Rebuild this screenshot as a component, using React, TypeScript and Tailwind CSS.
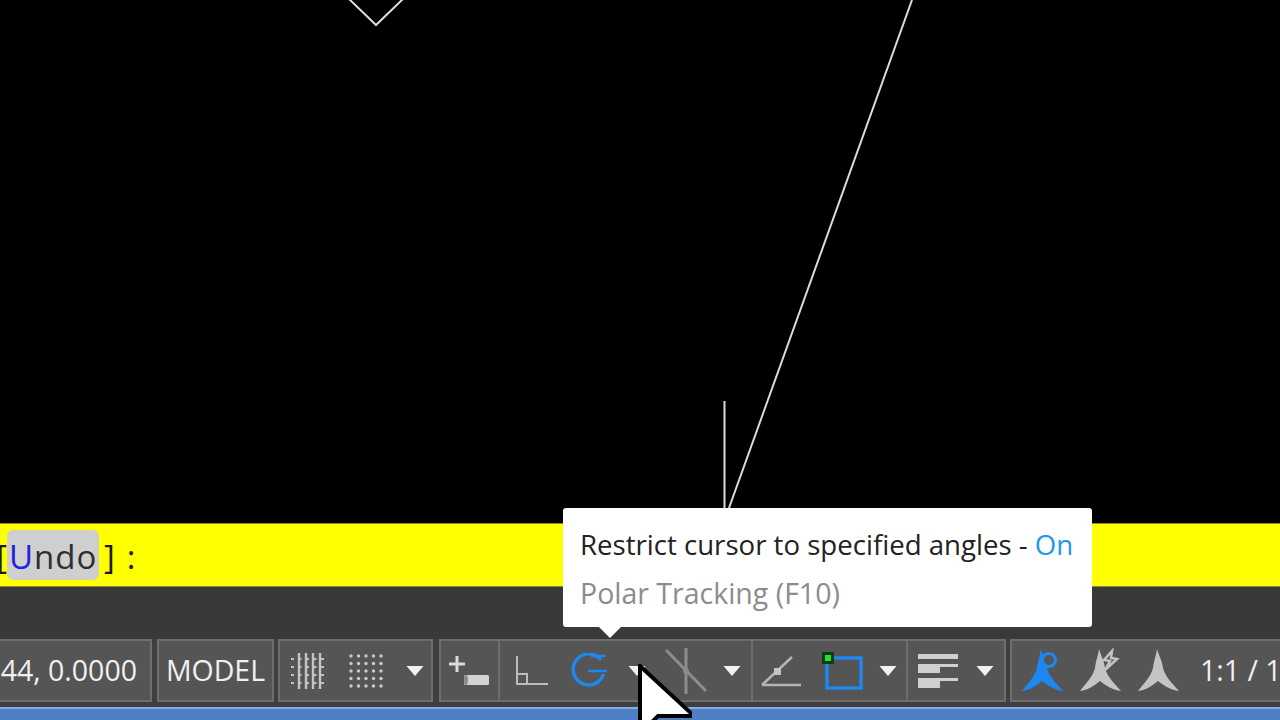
import React from 'react'

const Caret = () => (
  <svg width="18" height="12" viewBox="0 0 18 12" className="shrink-0">
    <path d="M0.5 1 H17.5 L9 11 Z" fill="#f2f2f2" />
  </svg>
)

const GridIcon = () => (
  <svg width="38" height="38" viewBox="0 0 38 38" fill="none" className="shrink-0">
    <path d="M9 1V37M16 1V37M23 1V37M30 1V37" stroke="#c4c4c4" strokeWidth="2.4" />
    <path d="M1 7H37M1 15H37M1 23H37M1 31H37" stroke="#c4c4c4" strokeWidth="2" strokeDasharray="3 4.5" />
  </svg>
)

const SnapIcon = () => (
  <svg width="36" height="36" viewBox="0 0 36 36" fill="#c9c9c9" className="shrink-0">
    {[3, 10.5, 18, 25.5, 33].flatMap((y) =>
      [3, 10.5, 18, 25.5, 33].map((x) => <circle key={`${x}-${y}`} cx={x} cy={y} r="1.7" />)
    )}
  </svg>
)

const InferIcon = () => (
  <svg width="42" height="34" viewBox="0 0 42 34" fill="none" className="shrink-0">
    <path d="M1 10H17M9 2V18" stroke="#dcdcdc" strokeWidth="3" />
    <rect x="16" y="21" width="25" height="10" rx="1.5" fill="#d4d4d4" />
    <ellipse cx="18" cy="26" rx="2" ry="5" fill="#8a8a8a" />
  </svg>
)

const OrthoIcon = () => (
  <svg width="34" height="32" viewBox="0 0 34 32" fill="none" stroke="#bdbdbd" strokeWidth="2" className="shrink-0">
    <path d="M2 1V29H33" />
    <path d="M2 19H12V29" />
  </svg>
)

const PolarIcon = () => (
  <svg width="38" height="36" viewBox="0 0 38 36" fill="none" stroke="#1e88f0" strokeWidth="3.4" className="shrink-0">
    <path d="M31 7A15.5 15.5 0 1 0 33.5 21" />
    <path d="M18 18H37M21 3H35" strokeWidth="2.6" />
  </svg>
)

const IsoIcon = () => (
  <svg width="44" height="48" viewBox="0 0 44 48" fill="none" stroke="#8d8d8d" strokeWidth="3" className="shrink-0">
    <path d="M2 3L42 44" />
    <path d="M22 1V47" />
    <circle cx="22" cy="24" r="3" fill="#8d8d8d" stroke="none" />
  </svg>
)

const ObjectTrackIcon = () => (
  <svg width="40" height="32" viewBox="0 0 40 32" fill="none" stroke="#b5b5b5" strokeWidth="2.5" className="shrink-0">
    <path d="M1 30H40M1 30L31 2" />
    <rect x="13" y="13" width="7" height="7" fill="#c4c4c4" stroke="none" />
  </svg>
)

const OsnapIcon = () => (
  <svg width="42" height="38" viewBox="0 0 42 38" fill="none" className="shrink-0">
    <rect x="5" y="6" width="34" height="30" stroke="#1e88f0" strokeWidth="3.4" />
    <rect x="0" y="0" width="12" height="12" fill="#0d3d14" />
    <rect x="3" y="3" width="6" height="6" fill="#25e02c" />
  </svg>
)

const LinesIcon = () => (
  <svg width="42" height="36" viewBox="0 0 42 36" fill="#cfcfcf" className="shrink-0">
    <rect x="1" y="1" width="40" height="5" />
    <rect x="1" y="11" width="40" height="3" />
    <rect x="1" y="14" width="22" height="6" />
    <rect x="1" y="25" width="40" height="3" />
    <rect x="1" y="27" width="22" height="8" />
  </svg>
)

const Annotation = ({ color, kind }: { color: string; kind: 'ring' | 'bolt' | 'plain' }) => (
  <svg width="42" height="46" viewBox="0 0 42 46" className="shrink-0">
    <path
      d="M19 1C21 8 24 12 25 20C27 28 33 34 41 43C33 42 26 38 20 33C14 38 8 42 0 43C7 34 13 28 15 20C16 12 18 8 19 1Z"
      fill={color}
    />
    {kind === 'ring' && <circle cx="27" cy="12" r="6.5" fill="#555555" stroke={color} strokeWidth="3" />}
    {kind === 'bolt' && <path d="M32 3L24 12L30 13L25 22L37 11L31 10Z" fill="#555555" stroke={color} strokeWidth="2.5" />}
  </svg>
)

export default function App() {
  return (
    <div className="relative flex flex-col w-[1280px] h-[720px] overflow-hidden bg-black font-['Noto_Sans',sans-serif]">
      {/* drawing area */}
      <div className="relative h-[523px] shrink-0">
        <svg width="1280" height="523" viewBox="0 0 1280 523" fill="none" stroke="#dcdcdc" strokeWidth="2" className="block">
          <path d="M347 -3L376 25L405 -3" />
          <path d="M912 0L729 508" />
          <path d="M724.5 401V508" />
        </svg>
      </div>

      {/* command line */}
      <div className="flex items-center h-[64px] shrink-0 bg-[#ffff00] border-y border-[#8b8a3c] text-[33px] text-[#1c1c1c] font-['Open_Sans',sans-serif]">
        <span className="w-[7px] pt-[3px] overflow-hidden flex justify-end">[</span>
        <span className="flex items-center h-[50px] w-[92px] pl-[2px] pt-[3px] rounded-md bg-[#cfcfcf] text-[#2e2e2e] tracking-[1px]">
          <span className="text-[#2020e0]">U</span>ndo
        </span>
        <span className="ml-[5px] pt-[3px]">]</span>
        <span className="ml-[12px] pt-[3px]">:</span>
      </div>

      <div className="h-[52px] shrink-0 bg-[#3a3939]" />

      {/* status bar */}
      <div className="flex items-stretch h-[68px] shrink-0 pb-[5px] bg-[#3f3f3f] text-[28.5px] text-[#f0f0f0] font-['Open_Sans',sans-serif]">
        <div className="flex items-center justify-end w-[152px] pr-[13px] border-y-2 border-r-2 border-[#6e6e6e] bg-[#555555]">
          <span className="whitespace-nowrap">44, 0.0000</span>
        </div>
        <div className="flex items-center justify-center ml-[5px] w-[117px] border-2 border-[#6e6e6e] bg-[#555555]">MODEL</div>
        <div className="flex items-center ml-[4px] w-[155px] pl-[10px] gap-[20px] border-2 border-[#6e6e6e] bg-[#555555]">
          <GridIcon />
          <SnapIcon />
          <span className="ml-[2px]"><Caret /></span>
        </div>
        <div className="flex ml-[6px] w-[314px] border-2 border-[#6e6e6e] bg-[#555555]">
          <div className="flex items-center justify-center w-[59px] border-r-2 border-[#6e6e6e]">
            <InferIcon />
          </div>
          <div className="flex items-center pl-[15px] w-[253px]">
            <OrthoIcon />
            <span className="ml-[21px]"><PolarIcon /></span>
            <span className="ml-[20px]"><Caret /></span>
            <span className="ml-[18px]"><IsoIcon /></span>
            <span className="ml-[15px]"><Caret /></span>
          </div>
        </div>
        <div className="flex w-[253px] border-y-2 border-r-2 border-[#6e6e6e] bg-[#555555]">
          <div className="flex items-center w-[155px] pl-[8px] border-r-2 border-[#6e6e6e]">
            <ObjectTrackIcon />
            <span className="ml-[21px]"><OsnapIcon /></span>
            <span className="ml-[15px]"><Caret /></span>
          </div>
          <div className="flex items-center pl-[9px]">
            <LinesIcon />
            <span className="ml-[17px]"><Caret /></span>
          </div>
        </div>
        <div className="flex items-center flex-1 ml-[4px] pl-[10px] gap-[16px] border-y-2 border-l-2 border-[#6e6e6e] bg-[#555555] overflow-hidden">
          <Annotation color="#1e88f0" kind="ring" />
          <Annotation color="#c4c4c4" kind="bolt" />
          <Annotation color="#c4c4c4" kind="plain" />
          <span className="ml-[4px] whitespace-nowrap">1:1 / 100%</span>
        </div>
      </div>

      <div className="flex-1 bg-[#4f80c6] border-t-2 border-[#86aee0]" />

      {/* tooltip */}
      <div className="absolute left-[563px] top-[508px] w-[529px] h-[119px] pl-[17px] pt-[16px] rounded-[3px] bg-white font-['Open_Sans',sans-serif] leading-[40px]">
        <div className="whitespace-nowrap text-[27.6px] text-[#222222]">
          Restrict cursor to specified angles - <span className="text-[#1f96ee]">On</span>
        </div>
        <div className="mt-[9px] whitespace-nowrap text-[28.5px] text-[#8c8c8c]">Polar Tracking (F10)</div>
        <svg width="24" height="12" viewBox="0 0 24 12" className="absolute left-[35px] top-[118px]">
          <path d="M0 0H24L12 12Z" fill="#ffffff" />
        </svg>
      </div>

      {/* mouse pointer */}
      <svg width="60" height="60" viewBox="0 0 60 60" className="absolute left-[632px] top-[664px]">
        <path d="M8 2V70L26 52H62Z" fill="#ffffff" stroke="#000000" strokeWidth="4" />
      </svg>
    </div>
  )
}
